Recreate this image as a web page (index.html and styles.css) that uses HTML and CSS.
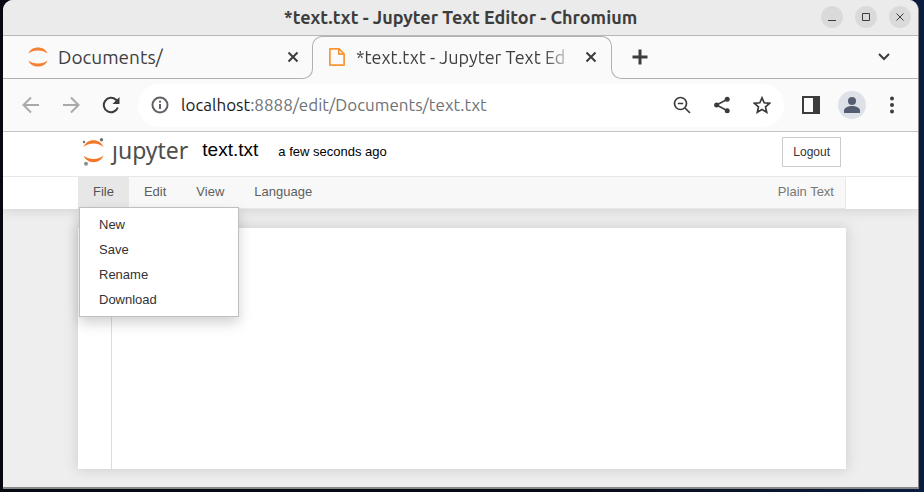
FILE: index.html
```html
<!DOCTYPE html>
<html lang="en">
<head>
<meta charset="utf-8">
<title>*text.txt - Jupyter Text Editor</title>
<link rel="stylesheet" href="styles.css">
</head>
<body>
<div class="window">
  <header class="titlebar">
    <h1 class="window-title">*text.txt - Jupyter Text Editor - Chromium</h1>
    <div class="window-controls">
      <button class="round" aria-label="Minimize"><svg width="22" height="22" viewBox="0 0 22 22"><path d="M7 14.500h8"/></svg></button>
      <button class="round" aria-label="Maximize"><svg width="22" height="22" viewBox="0 0 22 22"><path d="M7.500 7.500h7v7h-7z"/></svg></button>
      <button class="round" aria-label="Close window"><svg width="22" height="22" viewBox="0 0 22 22"><path d="M7.500 7.500l7 7M14.500 7.500l-7 7"/></svg></button>
    </div>
  </header>

  <nav class="tabs" aria-label="Tabs">
    <div class="tab tab-idle">
      <svg width="20" height="20" viewBox="0 0 20 20" fill="#f58234"><path d="M0.500 6.500C2 2.500 5.500 .5 10 .5s8 2 9.500 6C17 4.500 14 3.500 10 3.500S3 4.500.5 6.500z"/><path d="M.5 13.500c1.500 4 5 6 9.500 6s8-2 9.500-6c-2.500 2-5.500 3-9.500 3s-7-1-9.500-3z"/></svg>
      <a class="tab-name" href="#documents">Documents/</a>
      <button class="icon" aria-label="Close Documents tab"><svg width="12" height="12" viewBox="0 0 12 12" class="line"><path d="M1.500 1.500l9 9M10.500 1.500l-9 9"/></svg></button>
    </div>
    <div class="tab tab-active">
      <svg width="18" height="20" viewBox="0 0 18 20" fill="none" stroke="#f79633" stroke-width="1.700"><path d="M1.900 1.900h9.200l5 5v11.200H1.900zM10.800 1.900v5.200h5.300" stroke-linejoin="round"/></svg>
      <a class="tab-name tab-fade" href="#text">*text.txt - Jupyter Text Ed</a>
      <button class="icon" aria-label="Close text.txt tab"><svg width="12" height="12" viewBox="0 0 12 12" class="line"><path d="M1.500 1.500l9 9M10.500 1.500l-9 9"/></svg></button>
    </div>
    <div class="tab-rest">
      <button class="icon" aria-label="New tab"><svg width="16" height="16" viewBox="0 0 16 16" class="line plus"><path d="M8 .5v15M.5 8h15"/></svg></button>
      <button class="icon" aria-label="Search tabs"><svg width="12" height="8" viewBox="0 0 12 8" class="line"><path d="M1 1l5 5 5-5"/></svg></button>
    </div>
  </nav>

  <div class="toolbar">
    <button class="icon" aria-label="Back"><svg width="18" height="18" viewBox="0 0 18 18" class="line faded"><path d="M17 9H2M9 1.500L1.500 9 9 16.500"/></svg></button>
    <button class="icon" aria-label="Forward"><svg width="18" height="18" viewBox="0 0 18 18" class="line faded"><path d="M1 9h15M9 1.500L16.500 9 9 16.500"/></svg></button>
    <button class="icon reload" aria-label="Reload"><svg width="18" height="18" viewBox="0 0 18 18" class="line"><path d="M15.800 11.500A7.200 7.200 0 1 1 14 3.800l2 2"/><path d="M17.500 1v7h-7z" fill="#3c3c3c" stroke="none"/></svg></button>
    <div class="address">
      <svg width="18" height="18" viewBox="0 0 18 18" class="line soft"><circle cx="9" cy="9" r="7.500"/><path d="M9 8v5M9 4.800v1.600"/></svg>
      <a class="url" href="#text"><span class="host">localhost</span>:8888/edit/Documents/text.txt</a>
      <button class="icon" aria-label="Zoom"><svg width="18" height="18" viewBox="0 0 18 18" class="line"><circle cx="7.500" cy="7.500" r="6" stroke-width="1.700"/><path d="M12 12l5 5M4.800 7.500h5.400" stroke-width="1.700"/></svg></button>
      <button class="icon" aria-label="Share"><svg width="18" height="18" viewBox="0 0 18 18"><path d="M14.500 3.200L3.500 9l11 5.800" fill="none" stroke="#3c3c3c" stroke-width="1.600"/><g fill="#3c3c3c"><circle cx="14.200" cy="3.300" r="2.500"/><circle cx="3.600" cy="9" r="2.500"/><circle cx="14.200" cy="14.700" r="2.500"/></g></svg></button>
      <button class="icon" aria-label="Bookmark"><svg width="18" height="18" viewBox="0 0 18 18" fill="none" stroke="#3c3c3c" stroke-width="1.700"><path d="M9 1.800l2.200 5 5.400.5-4.100 3.600 1.200 5.300L9 13.400l-4.700 2.800 1.200-5.300L1.400 7.300l5.400-.5z"/></svg></button>
    </div>
    <button class="icon side-panel" aria-label="Side panel"><svg width="18" height="18" viewBox="0 0 18 18"><path d="M0 0h18v18H0zM2 2v14h9V2z" fill="#3c3c3c" fill-rule="evenodd"/></svg></button>
    <button class="icon profile" aria-label="Profile"><svg width="28" height="28" viewBox="0 0 28 28"><circle cx="14" cy="14" r="14" fill="#dee1e7"/><circle cx="14" cy="10" r="4" fill="#545e72"/><path d="M6 22v-2.500c0-2.600 4-4.500 8-4.500s8 1.900 8 4.500V22z" fill="#545e72"/></svg></button>
    <button class="icon" aria-label="Menu"><svg width="4" height="18" viewBox="0 0 4 18" fill="#3c3c3c"><circle cx="2" cy="2.500" r="2"/><circle cx="2" cy="9" r="2"/><circle cx="2" cy="15.500" r="2"/></svg></button>
  </div>

  <main class="page">
    <div class="page-head">
      <div class="container brand-row">
        <a class="brand" href="#home" aria-label="jupyter">
          <svg width="24" height="28" viewBox="0 0 24 28"><g fill="#f37726"><path d="M1.500 9C3 5 7 2.300 11.500 2.300S20 5 21.500 9c-2.500-2.300-6-3.500-10-3.500S4 6.700 1.500 9z"/><path d="M1.500 17.500c1.500 4 5.500 6.700 10 6.700s8.500-2.700 10-6.700c-2.500 2.300-6 3.500-10 3.500s-7.500-1.200-10-3.500z"/></g><circle cx="19.500" cy="1.800" r="1.700" fill="#6f7071"/><circle cx="2" cy="4" r="1.200" fill="#6f7071"/><circle cx="4" cy="25.800" r="2" fill="#8e8e8f"/></svg>
          <span class="wordmark">ȷupyter</span>
        </a>
        <a class="filename" href="#rename">text.txt</a>
        <span class="modified">a few seconds ago</span>
        <button class="logout">Logout</button>
      </div>
    </div>
    <div class="menu-band">
      <div class="container">
        <nav class="menubar" aria-label="Editor menu">
          <div class="menu-holder">
            <button class="menu-button open" aria-expanded="true">File</button>
            <div class="dropdown">
              <a href="#new">New</a>
              <a href="#save">Save</a>
              <a href="#rename">Rename</a>
              <a href="#download">Download</a>
            </div>
          </div>
          <button class="menu-button">Edit</button>
          <button class="menu-button">View</button>
          <button class="menu-button">Language</button>
          <span class="mode">Plain Text</span>
        </nav>
      </div>
    </div>
    <div class="container editor-area">
      <div class="editor">
        <div class="gutter"></div>
        <textarea class="code" aria-label="File contents"></textarea>
      </div>
    </div>
  </main>
</div>
</body>
</html>
```
FILE: styles.css
```css
* { box-sizing: border-box; }

html, body { height: 100%; }

body {
  margin: 0;
  padding: 0 5px 3px 3px;
  background: linear-gradient(90deg, #070812 60%, #0a1c40);
  font-family: "Liberation Sans", Arial, sans-serif;
  font-size: 13px;
}

a { color: inherit; text-decoration: none; }

button {
  margin: 0;
  padding: 0;
  border: 0;
  background: none;
  font: inherit;
  color: inherit;
}

svg { display: block; flex: none; }

.window {
  display: flex;
  flex-direction: column;
  height: 100%;
  border-right: 1px solid #858585;
  border-bottom: 2px solid #858a88;
  border-radius: 10px 10px 0 0;
  background: #fafafa;
  overflow: hidden;
}

/* Title bar */
.titlebar {
  display: grid;
  grid-template-columns: 1fr auto 1fr;
  align-items: center;
  height: 36px;
  padding: 0 7px 1px;
  border-bottom: 1px solid #b8b8b8;
  background: #ebebeb;
}

.window-title {
  grid-column: 2;
  margin: 0;
  padding-bottom: 1px;
  color: #3d3d3d;
  font: 700 18px/24px Ubuntu, "Open Sans", sans-serif;
  white-space: nowrap;
}

.window-controls {
  display: flex;
  justify-content: flex-end;
  gap: 12px;
}

.round {
  border-radius: 50%;
  background: #dadada;
}

.round svg { fill: none; stroke: #3d3d3d; stroke-width: 1; }

.line { fill: none; stroke: #3c3c3c; stroke-width: 2; }
.plus { stroke-width: 3; }
.faded { stroke: #a9a9a9; }
.soft { stroke: #5f6368; }

/* Tabs */
.tabs {
  display: flex;
  align-items: flex-end;
  height: 43px;
  color: #3f3f3f;
  font: 19px/24px Ubuntu, "Noto Sans", sans-serif;
}

.tab { display: flex; align-items: center; min-width: 0; }

.tab-idle, .tab-rest {
  height: 33px;
  padding-bottom: 10px;
  border-bottom: 1px solid #b0b0b0;
}

.tab-idle {
  flex: 0 1 310px;
  gap: 10px;
  padding-left: 25px;
  padding-right: 13px;
  border-right: 1px solid #b0b0b0;
  border-bottom-right-radius: 10px;
}

.tab-active {
  position: relative;
  flex: 0 1 298px;
  gap: 10px;
  height: 43px;
  padding: 0 14px 1px 15px;
  font-size: 18px;
}

.tab-active::before {
  content: "";
  position: absolute;
  inset: 0 -1px 20px -1px;
  border: 1px solid #b0b0b0;
  border-bottom: 0;
  border-radius: 10px 10px 0 0;
  pointer-events: none;
}

.tab-rest {
  display: flex;
  flex: 1;
  align-items: center;
  justify-content: space-between;
  padding-left: 20px;
  padding-right: 28px;
  border-left: 1px solid #b0b0b0;
  border-bottom-left-radius: 10px;
}

.tab-name {
  flex: 1;
  min-width: 0;
  overflow: hidden;
  white-space: nowrap;
}

.tab-fade {
  -webkit-mask-image: linear-gradient(90deg, #000 86%, transparent);
  mask-image: linear-gradient(90deg, #000 86%, transparent);
}

/* Toolbar */
.toolbar {
  display: flex;
  align-items: center;
  gap: 22px;
  height: 53px;
  padding: 0 24px 0 19px;
  border-bottom: 1px solid #c4c4c4;
}

.reload { margin-right: -4px; }
.side-panel { margin-right: -4px; }
.profile { margin-right: 2px; }

.address {
  display: flex;
  flex: 1;
  align-items: center;
  gap: 22px;
  height: 43px;
  margin-right: -4px;
  padding: 0 13px;
  border-radius: 22px;
  background: #fff;
}

.url {
  flex: 1;
  margin-left: -10px;
  color: #6e7276;
  font: 17px/24px Ubuntu, "Noto Sans", sans-serif;
  white-space: nowrap;
}

.host { color: #1a1a1a; }

/* Page */
.page {
  flex: 1;
  display: flex;
  flex-direction: column;
  min-height: 0;
  background: #eee;
}

.container {
  width: 100%;
  padding-left: 75px;
  padding-right: 72px;
}

.page-head {
  border-bottom: 1px solid #e7e7e7;
  background: #fff;
}

.brand-row {
  display: flex;
  align-items: center;
  height: 44px;
  padding-right: 77px;
  padding-bottom: 4px;
  color: #000;
}

.brand {
  display: flex;
  align-items: center;
  gap: 6px;
  padding-left: 4px;
}

.wordmark {
  padding-bottom: 4px;
  color: #4e4e4e;
  font: 23px/28px "Noto Sans", sans-serif;
}

.filename {
  margin-left: 14px;
  padding-bottom: 4px;
  font-size: 19px;
  line-height: 24px;
}

.modified {
  flex: 1;
  margin-left: 20px;
  padding-bottom: 1px;
}

.logout {
  height: 30px;
  padding: 0 10px;
  border: 1px solid #ccc;
  background: #fff;
  color: #333;
  font-size: 12px;
}

.menu-band {
  position: relative;
  z-index: 1;
  background: #fff;
  box-shadow: 0 0 12px 1px rgba(87, 87, 87, 0.2);
  clip-path: inset(0 0 -140px 0);
}

.menubar {
  display: flex;
  align-items: stretch;
  height: 32px;
  border-right: 1px solid #e7e7e7;
  border-bottom: 1px solid #e7e7e7;
  background: #f8f8f8;
  color: #5e5e5e;
}

.menu-holder { position: relative; display: flex; }

.menu-button { padding: 0 15px 2px; }

.menu-button.open { background: #e7e7e7; color: #555; }

.mode {
  margin-left: auto;
  padding-right: 11px;
  color: #777;
  line-height: 30px;
}

.dropdown {
  position: absolute;
  top: 30px;
  left: 1px;
  display: flex;
  flex-direction: column;
  width: 160px;
  padding: 4px 0;
  border: 1px solid #bfbfbf;
  background: #fff;
  box-shadow: 0 6px 12px rgba(0, 0, 0, 0.18);
  color: #333;
}

.dropdown a {
  padding: 0 19px;
  line-height: 25px;
}

.editor-area {
  flex: 1;
  display: flex;
  padding-top: 19px;
  padding-bottom: 18px;
}

.editor {
  display: flex;
  flex: 1;
  background: #fff;
  box-shadow: 0 0 12px 1px rgba(87, 87, 87, 0.2);
}

.gutter {
  width: 34px;
  border-right: 1px solid #ddd;
}

.code {
  flex: 1;
  padding: 4px;
  border: 0;
  outline: 0;
  background: none;
  resize: none;
  font: 14px/17px "Liberation Mono", monospace;
}
```
